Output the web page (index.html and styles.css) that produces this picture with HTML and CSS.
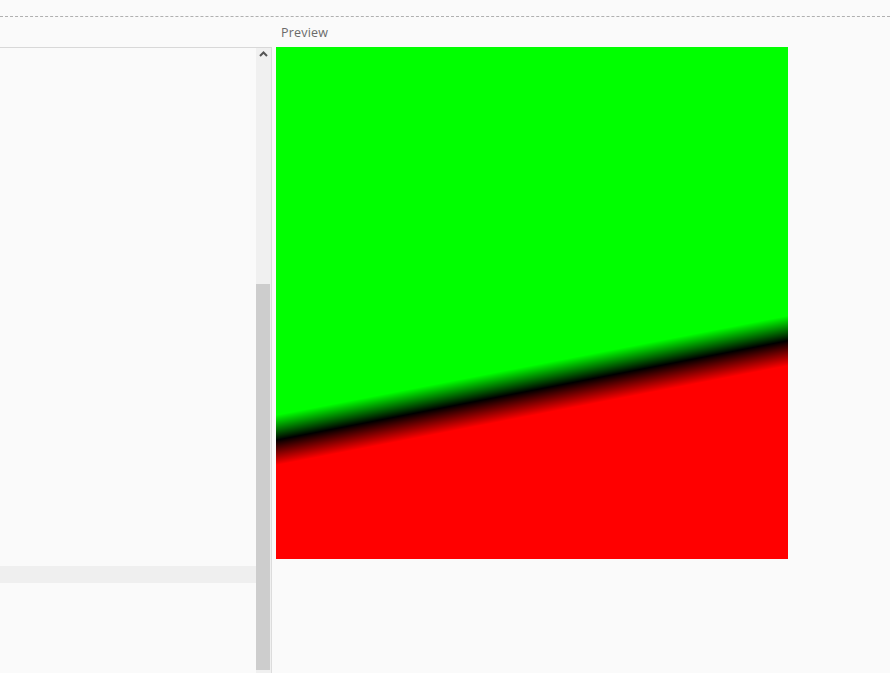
FILE: index.html
```html
<!DOCTYPE html>
<html>
<head>
<meta charset="utf-8">
<link rel="stylesheet" href="styles.css">
</head>
<body>
<div class="top"></div>
<div class="main">
  <div class="left">
    <div class="left-head"></div>
    <div class="panel">
      <div class="panel-content">
        <div class="blank"></div>
        <div class="band"></div>
      </div>
      <div class="scrollbar">
        <div class="sb-btn">
          <svg width="15" height="14" viewBox="0 0 15 14"><path d="M4 8 L7.5 4.5 L11 8" fill="none" stroke="#555" stroke-width="2"/></svg>
        </div>
        <div class="sb-track"></div>
        <div class="sb-thumb"></div>
        <div class="sb-bottom"></div>
      </div>
    </div>
  </div>
  <div class="right">
    <div class="label">Preview</div>
    <div class="canvas"></div>
  </div>
</div>
</body>
</html>
```
FILE: styles.css
```css
html, body {
  margin: 0;
  padding: 0;
  background: #fafafa;
  height: 673px;
  overflow: hidden;
}
.top {
  height: 16px;
  border-bottom: 1px dashed #b0b0b0;
}
.main {
  display: flex;
  height: 656px;
}
.left {
  width: 272px;
  display: flex;
  flex-direction: column;
}
.left-head {
  height: 30px;
  flex: none;
}
.panel {
  flex: 1;
  display: flex;
  border-top: 1px solid #d8d8d8;
  border-right: 1px solid #dcdcdc;
  overflow: hidden;
}
.panel-content {
  flex: 1;
  display: flex;
  flex-direction: column;
}
.blank {
  height: 518px;
  flex: none;
}
.band {
  height: 17px;
  background: #efefef;
}
.scrollbar {
  width: 15px;
  display: flex;
  flex-direction: column;
  background: #f0f0f0;
}
.sb-btn {
  height: 14px;
  flex: none;
  display: flex;
}
.sb-track {
  height: 222px;
  flex: none;
}
.sb-thumb {
  height: 386px;
  flex: none;
  background: #cdcdcd;
  margin-right: 1px;
}
.sb-bottom {
  flex: 1;
  background: #f0f0f0;
}
.right {
  padding-left: 4px;
  display: flex;
  flex-direction: column;
}
.label {
  height: 30px;
  box-sizing: border-box;
  padding: 8px 0 0 5px;
  font-family: "Open Sans", "Liberation Sans", sans-serif;
  font-size: 12.5px;
  letter-spacing: 0.2px;
  color: #6a6a6a;
  line-height: 16px;
}
.canvas {
  width: 512px;
  height: 512px;
  background: linear-gradient(169deg, #00ff00 0%, #00ff00 60.2%, #000000 64.3%, #ff0000 68.4%, #ff0000 100%);
}
```
